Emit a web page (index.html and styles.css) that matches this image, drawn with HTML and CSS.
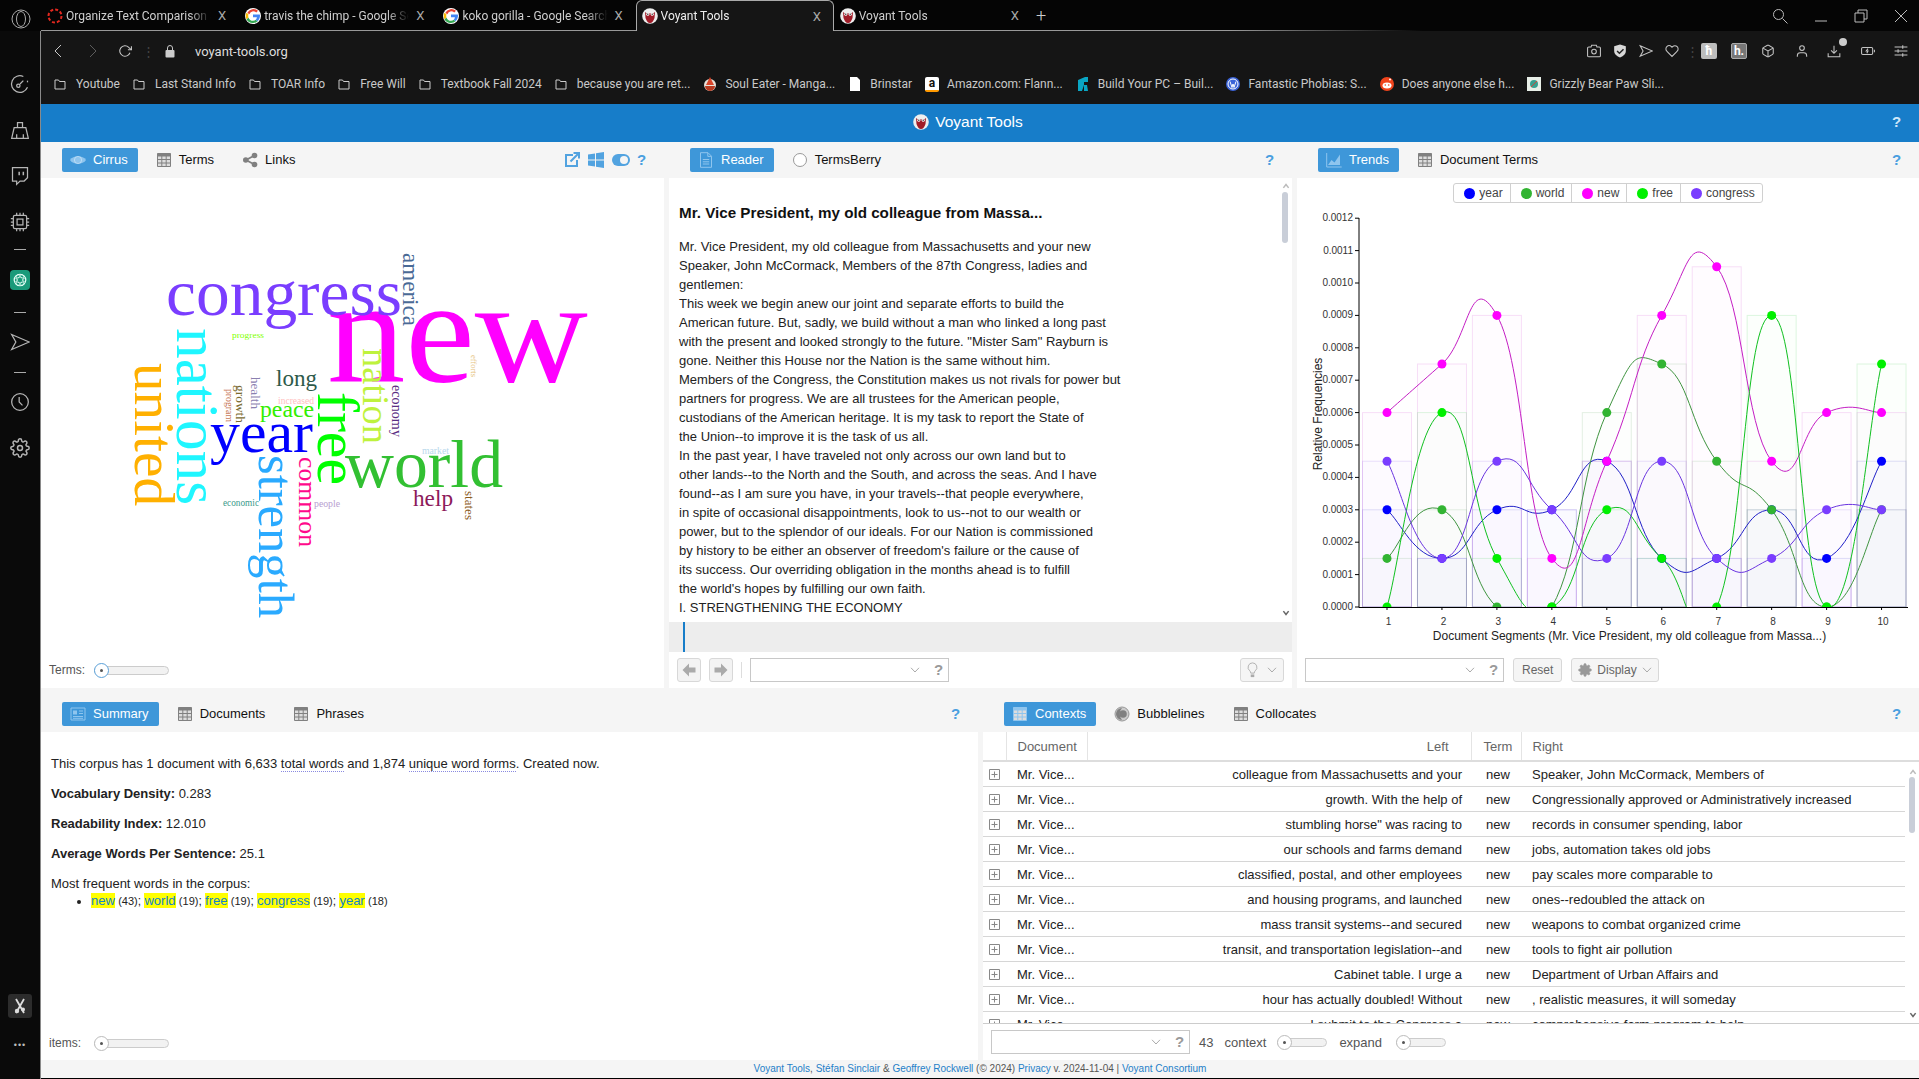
FILE: index.html
```html
<!DOCTYPE html>
<html lang="en">
<head>
<meta charset="utf-8">
<title>Voyant Tools</title>
<link rel="stylesheet" href="styles.css">
</head>
<body>
<svg class="sprite" xmlns="http://www.w3.org/2000/svg">
  <symbol id="i-grid" viewBox="0 0 16 16"><path d="M1.5 1.5h13v13h-13z" fill="#ddd" stroke="currentColor"/><path d="M1.5 1.5h13v3h-13z" fill="currentColor"/><path d="M1.5 7.5h13M1.5 11h13M5.8 4v10.5M10.2 4v10.5" fill="none" stroke="currentColor"/></symbol>
  <symbol id="i-eye" viewBox="0 0 16 16"><path d="M0 8c3-5 13-5 16 0-3 5-13 5-16 0z" fill="currentColor"/><circle cx="8" cy="8" r="3.6" fill="currentColor" stroke="#fff" stroke-opacity=".4"/></symbol>
  <symbol id="i-share" viewBox="0 0 16 16"><path d="M12.5 3.5 4 8l8.500 4.500" fill="none" stroke="currentColor" stroke-width="1.800"/><circle cx="12.500" cy="3.500" r="2.800" fill="currentColor"/><circle cx="3.800" cy="8" r="2.800" fill="currentColor"/><circle cx="12.500" cy="12.500" r="2.800" fill="currentColor"/></symbol>
  <symbol id="i-doc" viewBox="0 0 16 16"><path d="M2.500.7h7.500l3.500 3.500v11.100h-11z" fill="none" stroke="currentColor"/><path d="M9.800 1v3.400h3.400M4.800 7.500h6.400M4.800 9.800h6.400M4.800 12h6.400" fill="none" stroke="currentColor"/></symbol>
  <symbol id="i-radio" viewBox="0 0 16 16"><circle cx="8" cy="8" r="6.500" fill="#fff" stroke="currentColor"/></symbol>
  <symbol id="i-trend" viewBox="0 0 16 16"><path d="M.7 1v14h15" fill="none" stroke="currentColor"/><path d="M2 13l3.500-5 3 2.500L14 2.500V13z" fill="currentColor"/></symbol>
  <symbol id="i-card" viewBox="0 0 16 16"><path d="M1 2h14v12H1z" fill="none" stroke="currentColor"/><path d="M3 4.500h4v4H3z" fill="currentColor"/><path d="M9 5h4M9 7.500h4M3 10.500h10M3 12.300h10" stroke="currentColor"/></symbol>
  <symbol id="i-bubble" viewBox="0 0 16 16"><circle cx="8" cy="8" r="7" fill="#ccc" stroke="#999"/><path d="M8 2a6 6 0 0 0 0 12 9 9 0 0 1 0-12z" fill="currentColor"/><circle cx="9" cy="8" r="3.800" fill="currentColor"/></symbol>
  <symbol id="i-open" viewBox="0 0 16 16"><path d="M9 3H2v11h11V8" fill="none" stroke="currentColor" stroke-width="2"/><path d="M6.500 9.500 14 2M9.500 1H15v5.500" fill="none" stroke="currentColor" stroke-width="2"/></symbol>
  <symbol id="i-win" viewBox="0 0 16 16"><path d="M0 2.500 7 1.500v6H0zM8 1.300 16 0v7.500H8zM0 8.500h7v6l-7-1zM8 8.500h8V16l-8-1.300z" fill="currentColor"/></symbol>
  <symbol id="i-toggle" viewBox="0 0 18 12"><rect width="18" height="12" rx="6" fill="currentColor"/><circle cx="12" cy="6" r="4" fill="#f5f5f5"/></symbol>
  <symbol id="i-chev" viewBox="0 0 10 6"><path d="M1 .8 5 5l4-4.200" fill="none" stroke="currentColor"/></symbol>
  <symbol id="i-chevbold" viewBox="0 0 10 8"><path d="M1.500 1.500 5 6l3.500-4.500" fill="none" stroke="currentColor" stroke-width="2"/></symbol>
  <symbol id="i-arrow" viewBox="0 0 16 16"><path d="M8 1.500 1.500 8 8 14.500V10.500h6.500v-5H8z" fill="currentColor"/></symbol>
  <symbol id="i-bulb" viewBox="0 0 12 18"><path d="M6 1a5 5 0 0 0-3 9c.8.700 1 1.500 1 2.500h4c0-1 .2-1.800 1-2.500A5 5 0 0 0 6 1z" fill="#f4f4f4" stroke="currentColor"/><path d="M4 14h4v3H4z" fill="currentColor"/></symbol>
  <symbol id="i-gear" viewBox="0 0 24 24"><circle cx="12" cy="12" r="3"/><path d="M19.400 15a1.650 1.650 0 0 0 .33 1.820l.06.06a2 2 0 0 1 0 2.830 2 2 0 0 1-2.830 0l-.06-.06a1.650 1.650 0 0 0-1.820-.33 1.650 1.650 0 0 0-1 1.510V21a2 2 0 0 1-2 2 2 2 0 0 1-2-2v-.09A1.650 1.650 0 0 0 9 19.400a1.650 1.650 0 0 0-1.820.33l-.06.06a2 2 0 0 1-2.830 0 2 2 0 0 1 0-2.830l.06-.06a1.650 1.650 0 0 0 .33-1.820 1.650 1.650 0 0 0-1.510-1H3a2 2 0 0 1-2-2 2 2 0 0 1 2-2h.09A1.650 1.650 0 0 0 4.600 9a1.650 1.650 0 0 0-.33-1.820l-.06-.06a2 2 0 0 1 0-2.830 2 2 0 0 1 2.830 0l.06.06a1.650 1.650 0 0 0 1.820.33H9a1.650 1.650 0 0 0 1-1.510V3a2 2 0 0 1 2-2 2 2 0 0 1 2 2v.09a1.650 1.650 0 0 0 1 1.510 1.650 1.650 0 0 0 1.820-.33l.06-.06a2 2 0 0 1 2.830 0 2 2 0 0 1 0 2.830l-.06.06a1.650 1.650 0 0 0-.33 1.820V9a1.650 1.650 0 0 0 1.510 1H21a2 2 0 0 1 2 2 2 2 0 0 1-2 2h-.09a1.650 1.650 0 0 0-1.510 1z"/></symbol>
  <symbol id="i-plusbox" viewBox="0 0 11 11"><path d="M.5.500h10v10H.5zM5.500 2.500v6M2.500 5.500h6" fill="none" stroke="currentColor"/></symbol>
  <symbol id="i-folder" viewBox="0 0 12 12"><path d="M1 2h3.500l1 1.500H11V11H1z" fill="none" stroke="currentColor"/></symbol>
  <symbol id="i-voyant" viewBox="0 0 16 16"><circle cx="8" cy="8" r="7.800" fill="#eee"/><path d="M3 4l2 1.500h6L13 4l-.5 6C11.500 13 10 15 8 15s-3.500-2-4.500-5z" fill="#a01c28"/><circle cx="5.800" cy="6.300" r="1.500" fill="#fff"/><circle cx="10.200" cy="6.300" r="1.500" fill="#fff"/><circle cx="5.800" cy="6.300" r=".7" fill="#222"/><circle cx="10.200" cy="6.300" r=".7" fill="#222"/></symbol>
  <symbol id="i-google" viewBox="0 0 16 16"><circle cx="8" cy="8" r="8" fill="#fff"/><path d="M8 3.200a4.800 4.800 0 0 1 3.300 1.300l1.700-1.700A7 7 0 0 0 2.300 4.800l2 1.500A4.800 4.800 0 0 1 8 3.200z" fill="#ea4335"/><path d="M3.200 8c0-.6.100-1.200.3-1.700l-2-1.500a7 7 0 0 0 0 6.400l2-1.500A4.800 4.800 0 0 1 3.200 8z" fill="#fbbc05"/><path d="M8 12.800a4.800 4.800 0 0 1-4.500-3.100l-2 1.500A7 7 0 0 0 8 15a7 7 0 0 0 4.700-1.800l-1.900-1.500a4.800 4.800 0 0 1-2.800 1.100z" fill="#34a853"/><path d="M15 8c0-.5 0-1-.2-1.400H8v2.700h3.900a3.400 3.400 0 0 1-1.100 2.400l1.900 1.500C14 11.500 15 9.900 15 8z" fill="#4285f4"/></symbol>
</svg>

<div class="tabstrip">
  <div class="logo"><svg class="ic-18" viewBox="0 0 20 20"><circle cx="10" cy="10" r="9" class="st"/><ellipse cx="10" cy="10" rx="4.500" ry="7.500" class="st"/></svg></div>
  <div class="tab"><svg class="fav" viewBox="0 0 16 16"><circle cx="8" cy="8" r="6.500" fill="none" stroke="#e3281f" stroke-width="2" stroke-dasharray="3 2"/></svg><span class="tab-text">Organize Text Comparison Summary</span><span class="tab-x">X</span></div>
  <div class="tab"><svg class="fav"><use href="#i-google"/></svg><span class="tab-text">travis the chimp - Google Search</span><span class="tab-x">X</span></div>
  <div class="tab"><svg class="fav"><use href="#i-google"/></svg><span class="tab-text">koko gorilla - Google Search</span><span class="tab-x">X</span></div>
  <div class="tab active"><svg class="fav"><use href="#i-voyant"/></svg><span class="tab-text">Voyant Tools</span><span class="tab-x">X</span></div>
  <div class="tab"><svg class="fav"><use href="#i-voyant"/></svg><span class="tab-text">Voyant Tools</span><span class="tab-x">X</span></div>
  <span class="tab-plus">+</span>
  <div class="winctl">
    <svg class="ic-16" viewBox="0 0 16 16"><circle cx="6.500" cy="6.500" r="5" class="st"/><path d="m10.500 10.500 5 5" class="st"/></svg>
    <svg class="ic-14" viewBox="0 0 14 14"><path d="M1 12h12" class="st"/></svg>
    <svg class="ic-14" viewBox="0 0 14 14"><path d="M1 4h9v9H1zM4 4V1h9v9h-3" class="st"/></svg>
    <svg class="ic-14" viewBox="0 0 14 14"><path d="m1 1 12 12M13 1 1 13" class="st"/></svg>
  </div>
</div>

<div class="shell">
  <nav class="sidebar">
    <svg class="si ic-20" viewBox="0 0 24 24"><path d="M21 16A10 10 0 1 1 16 3" class="st"/><path d="M21 8v2" class="st"/><circle cx="10" cy="14" r="2" class="st"/><path d="m12 12 4-4" class="st"/></svg>
    <svg class="si ic-20" viewBox="0 0 24 24"><path d="M9 9V3h6v6M5 9h14l3 13H2z" class="st"/><path d="M8 22v-5M16 22v-5" class="st"/></svg>
    <svg class="si ic-20" viewBox="0 0 24 24"><path d="M21 2H3v16h5v4l4-4h5l4-4z" class="st"/><path d="M11 11V7M16 11V7" class="st2"/></svg>
    <svg class="si ic-20" viewBox="0 0 24 24"><rect x="4" y="4" width="16" height="16" rx="2" class="st"/><rect x="8.500" y="8.500" width="7" height="7" class="st"/><path d="M1 8h3M1 12h3M1 16h3M20 8h3M20 12h3M20 16h3M8 1v3M12 1v3M16 1v3M8 20v3M12 20v3M16 20v3" class="st"/></svg>
    <span class="sdiv sdiv-a"></span>
    <span class="gpt"><svg class="ic-14 gptmark" viewBox="0 0 24 24"><circle cx="12" cy="12" r="10" class="st2"/><ellipse cx="12" cy="12" rx="10" ry="4.500" class="st" transform="rotate(60 12 12)"/><ellipse cx="12" cy="12" rx="10" ry="4.500" class="st" transform="rotate(-60 12 12)"/><ellipse cx="12" cy="12" rx="10" ry="4.500" class="st"/></svg></span>
    <span class="sdiv sdiv-b"></span>
    <svg class="si ic-20" viewBox="0 0 24 24"><path d="M2 3l21 9-21 9 5-9z" class="st"/></svg>
    <span class="sdiv sdiv-b"></span>
    <svg class="si ic-20" viewBox="0 0 24 24"><circle cx="12" cy="12" r="10" class="st"/><path d="M11 6v6l4 4" class="st"/></svg>
    <svg class="si ic-20 gearline"><use href="#i-gear"/></svg>
    <span class="side-tool"><svg class="ic-16" viewBox="0 0 16 16"><path d="m4 1 8 14M12 1 4 15" class="st2"/><circle cx="5" cy="13" r="2.200" fill="#ddd"/><circle cx="11" cy="11.500" r="2" fill="#ddd"/></svg></span>
    <span class="side-dots">•••</span>
  </nav>

  <main class="main">
    <div class="addr">
      <svg class="ic-14 nav-back" viewBox="0 0 14 14"><path d="M9 1 3 7l6 6" class="st"/></svg>
      <svg class="ic-14 nav-fwd" viewBox="0 0 14 14"><path d="m5 1 6 6-6 6" class="st dim"/></svg>
      <svg class="ic-14 nav-reload" viewBox="0 0 24 24"><path d="M23 4v6h-6" class="st2"/><path d="M20.500 15a9 9 0 1 1-2.100-9.400L23 10" class="st2"/></svg>
      <span class="addr-dots">⋮</span>
      <svg class="ic-12 nav-lock" viewBox="0 0 12 14"><path d="M3.500 6V4a2.500 2.500 0 0 1 5 0v2" class="st"/><rect x="1.500" y="6" width="9" height="7.500" rx="1" fill="#ccc"/></svg>
      <span class="url">voyant-tools.org</span>
      <div class="addr-tools">
        <svg class="ic-14" viewBox="0 0 24 24"><path d="M23 20a2 2 0 0 1-2 2H3a2 2 0 0 1-2-2V7a2 2 0 0 1 2-2h4l1-3h8l1 3h4a2 2 0 0 1 2 2z" class="st2"/><circle cx="12" cy="13" r="4" class="st2"/></svg>
        <svg class="ic-14" viewBox="0 0 24 24"><path d="M12 1 22 4v8c0 6-5 9-10 11C7 21 2 18 2 12V4z" fill="#d8d8d8"/><path d="m7 12 4 4 7-7" fill="none" stroke="#222" stroke-width="2.500"/></svg>
        <svg class="ic-14" viewBox="0 0 24 24"><path d="M2 3l21 9-21 9 5-9z" class="st2"/></svg>
        <svg class="ic-14" viewBox="0 0 24 24"><path d="M20.840 4.610a5.500 5.500 0 0 0-7.780 0L12 5.670l-1.060-1.060a5.500 5.500 0 0 0-7.780 7.780l1.060 1.060L12 21.230l7.780-7.780 1.060-1.060a5.500 5.500 0 0 0 0-7.780z" class="st2"/></svg>
        <span class="tool-sep">⋮</span>
        <span class="ext-tile">ћ</span>
        <span class="ext-tile ext-dark">h.</span>
        <svg class="ic-14 ml-2" viewBox="0 0 24 24"><path d="M21 16V8a2 2 0 0 0-1-1.730l-7-4a2 2 0 0 0-2 0l-7 4A2 2 0 0 0 3 8v8a2 2 0 0 0 1 1.730l7 4a2 2 0 0 0 2 0l7-4A2 2 0 0 0 21 16z" class="st2"/><path d="M3.300 7 12 12l8.700-5M12 22V12" class="st2"/></svg>
        <svg class="ic-14 ml-8" viewBox="0 0 24 24"><path d="M20 22v-2a5 5 0 0 0-5-5H9a5 5 0 0 0-5 5v2" class="st2"/><circle cx="12" cy="7" r="4" class="st2"/></svg>
        <span class="dl"><svg class="ic-14" viewBox="0 0 24 24"><path d="M22 16v6H2v-6M7 11l5 5 5-5M12 16V3" class="st2"/></svg><i class="dl-dot"></i></span>
        <svg class="ic-14 ml-8" viewBox="0 0 24 24"><rect x="1" y="6" width="19" height="12" rx="2" class="st2"/><path d="M23 10v4M12 8l-3 4h3l-2 4" class="st2"/></svg>
        <svg class="ic-14 ml-7" viewBox="0 0 24 24"><path d="M1 5h22M1 12h22M1 19h22M15 2v6M7 9v6M15 16v6" class="st2"/></svg>
      </div>
    </div>

    <div class="bookmarks">
      <span class="bm"><svg class="bm-ic"><use href="#i-folder"/></svg>Youtube</span>
      <span class="bm"><svg class="bm-ic"><use href="#i-folder"/></svg>Last Stand Info</span>
      <span class="bm"><svg class="bm-ic"><use href="#i-folder"/></svg>TOAR Info</span>
      <span class="bm"><svg class="bm-ic"><use href="#i-folder"/></svg>Free Will</span>
      <span class="bm"><svg class="bm-ic"><use href="#i-folder"/></svg>Textbook Fall 2024</span>
      <span class="bm"><svg class="bm-ic"><use href="#i-folder"/></svg>because you are ret...</span>
      <span class="bm"><svg class="bm-fav" viewBox="0 0 14 14"><circle cx="7" cy="8" r="6" fill="#e8e0d8"/><path d="M7 0 11 8H3z" fill="#d8452a"/><path d="M2 9h10a5 5 0 0 1-10 0z" fill="#b83a20"/></svg>Soul Eater - Manga...</span>
      <span class="bm"><svg class="bm-fav" viewBox="0 0 14 14"><path d="M2 0h7l3 3v11H2z" fill="#fff"/></svg>Brinstar</span>
      <span class="bm"><span class="amz">a</span>Amazon.com: Flann...</span>
      <span class="bm"><svg class="bm-fav" viewBox="0 0 14 14"><path d="M2 3 9 0h3v5H8v3l-2 6H2z" fill="#0aa6c4"/><path d="M8 8h3l1 6H8z" fill="#0aa6c4"/></svg>Build Your PC – Buil...</span>
      <span class="bm"><svg class="bm-fav" viewBox="0 0 14 14"><circle cx="7" cy="7" r="7" fill="#3a63d8"/><circle cx="7" cy="7" r="5" fill="none" stroke="#fff"/><path d="m4 4.500 2 6 1-3.500 1 3.500 2-6" fill="none" stroke="#fff"/></svg>Fantastic Phobias: S...</span>
      <span class="bm"><svg class="bm-fav" viewBox="0 0 14 14"><circle cx="7" cy="7" r="7" fill="#f0441c"/><ellipse cx="7" cy="8.500" rx="4.500" ry="3" fill="#fff"/><circle cx="5.300" cy="8" r=".8" fill="#f0441c"/><circle cx="8.700" cy="8" r=".8" fill="#f0441c"/><circle cx="10" cy="2.500" r="1" fill="#fff"/></svg>Does anyone else h...</span>
      <span class="bm"><svg class="bm-fav" viewBox="0 0 14 14"><rect width="14" height="14" fill="#e8efe8"/><circle cx="7" cy="7" r="4" fill="#3aa090"/><path d="M4 10l6-6" stroke="#d0453a"/></svg>Grizzly Bear Paw Sli...</span>
    </div>

    <header class="banner">
      <span class="banner-title"><svg class="ic-16"><use href="#i-voyant"/></svg>Voyant Tools</span>
      <span class="help banner-help">?</span>
    </header>

    <section class="top-row">
      <article class="panel">
        <div class="ptabs">
          <span class="ptab on"><svg class="ic-16"><use href="#i-eye"/></svg>Cirrus</span>
          <span class="ptab"><svg class="ic-16"><use href="#i-grid"/></svg>Terms</span>
          <span class="ptab"><svg class="ic-16"><use href="#i-share"/></svg>Links</span>
          <span class="ptab-tools">
            <svg class="ic-16"><use href="#i-open"/></svg>
            <svg class="ic-16"><use href="#i-win"/></svg>
            <svg class="toggle"><use href="#i-toggle"/></svg>
            <span class="help">?</span>
          </span>
        </div>
        <div class="pbody">
          <svg class="cirrus" viewBox="41 178 623 474">
            <text x="327" y="382" font-size="148" fill="#ff00ff" textLength="261" lengthAdjust="spacingAndGlyphs">new</text>
            <text x="166" y="315" font-size="66" fill="#7a3dff" textLength="236" lengthAdjust="spacingAndGlyphs">congress</text>
            <text x="345" y="487" font-size="68" fill="#32c032" textLength="158" lengthAdjust="spacingAndGlyphs">world</text>
            <text x="210" y="452" font-size="60" fill="#0000ff" textLength="103" lengthAdjust="spacingAndGlyphs">year</text>
            <text transform="translate(403 253) rotate(90)" font-size="23" fill="#4a6a96" textLength="73" lengthAdjust="spacingAndGlyphs">america</text>
            <text transform="translate(177 328) rotate(90)" font-size="61" fill="#1ff6ff" textLength="177" lengthAdjust="spacingAndGlyphs">nations</text>
            <text transform="translate(135 363) rotate(90)" font-size="57" fill="#ffb000" textLength="143" lengthAdjust="spacingAndGlyphs">united</text>
            <text transform="translate(363 348) rotate(90)" font-size="38" fill="#bef23d" textLength="96" lengthAdjust="spacingAndGlyphs">nation</text>
            <text transform="translate(318 392) rotate(90)" font-size="60" fill="#00ff00" textLength="93" lengthAdjust="spacingAndGlyphs">free</text>
            <text transform="translate(259 455) rotate(90)" font-size="50" fill="#2aaaff" textLength="163" lengthAdjust="spacingAndGlyphs">strength</text>
            <text transform="translate(299 457) rotate(90)" font-size="26" fill="#ff0a8c" textLength="90" lengthAdjust="spacingAndGlyphs">common</text>
            <text transform="translate(471 355) rotate(90)" font-size="9" fill="#e6c27a" textLength="22" lengthAdjust="spacingAndGlyphs">efforts</text>
            <text transform="translate(392 385) rotate(90)" font-size="14" fill="#5a2d82" textLength="52" lengthAdjust="spacingAndGlyphs">economy</text>
            <text transform="translate(251 377) rotate(90)" font-size="13" fill="#8a80b0" textLength="32" lengthAdjust="spacingAndGlyphs">health</text>
            <text transform="translate(236 385) rotate(90)" font-size="13.500" fill="#7a6a30" textLength="38" lengthAdjust="spacingAndGlyphs">growth</text>
            <text transform="translate(226 389) rotate(90)" font-size="10" fill="#c87a5a" textLength="33" lengthAdjust="spacingAndGlyphs">program</text>
            <text transform="translate(465 491) rotate(90)" font-size="13" fill="#8a5a1a" textLength="29" lengthAdjust="spacingAndGlyphs">states</text>
            <text x="232" y="338" font-size="9" fill="#7fff00" textLength="32" lengthAdjust="spacingAndGlyphs">progress</text>
            <text x="276" y="386" font-size="23" fill="#2d5a4a" textLength="41" lengthAdjust="spacingAndGlyphs">long</text>
            <text x="278" y="404" font-size="9.500" fill="#ffc0c0" textLength="36" lengthAdjust="spacingAndGlyphs">increased</text>
            <text x="260" y="417" font-size="24" fill="#33ee00" textLength="54" lengthAdjust="spacingAndGlyphs">peace</text>
            <text x="413" y="506" font-size="23" fill="#8c1a5a" textLength="40" lengthAdjust="spacingAndGlyphs">help</text>
            <text x="422" y="454" font-size="9.500" fill="#b8d8ec" textLength="27" lengthAdjust="spacingAndGlyphs">market</text>
            <text x="223" y="506" font-size="9.500" fill="#3a9a8a" textLength="36" lengthAdjust="spacingAndGlyphs">economic</text>
            <text x="314" y="507" font-size="11" fill="#b8a0d0" textLength="26" lengthAdjust="spacingAndGlyphs">people</text>
          </svg>
        </div>
        <div class="ptool">
          <span class="sl-label">Terms:</span>
          <span class="slider focus"><i></i></span>
        </div>
      </article>

      <article class="panel">
        <div class="ptabs">
          <span class="ptab on"><svg class="ic-16"><use href="#i-doc"/></svg>Reader</span>
          <span class="ptab"><svg class="ic-16 muted"><use href="#i-radio"/></svg>TermsBerry</span>
          <span class="ptab-tools"><span class="help">?</span></span>
        </div>
        <div class="pbody reader">
          <h2 class="reader-title">Mr. Vice President, my old colleague from Massa...</h2>
          <p class="reader-text">Mr. Vice President, my old colleague from Massachusetts and your new<br>Speaker, John McCormack, Members of the 87th Congress, ladies and<br>gentlemen:<br>This week we begin anew our joint and separate efforts to build the<br>American future. But, sadly, we build without a man who linked a long past<br>with the present and looked strongly to the future. "Mister Sam" Rayburn is<br>gone. Neither this House nor the Nation is the same without him.<br>Members of the Congress, the Constitution makes us not rivals for power but<br>partners for progress. We are all trustees for the American people,<br>custodians of the American heritage. It is my task to report the State of<br>the Union--to improve it is the task of us all.<br>In the past year, I have traveled not only across our own land but to<br>other lands--to the North and the South, and across the seas. And I have<br>found--as I am sure you have, in your travels--that people everywhere,<br>in spite of occasional disappointments, look to us--not to our wealth or<br>power, but to the splendor of our ideals. For our Nation is commissioned<br>by history to be either an observer of freedom's failure or the cause of<br>its success. Our overriding obligation in the months ahead is to fulfill<br>the world's hopes by fulfilling our own faith.<br>I. STRENGTHENING THE ECONOMY</p>
          <div class="vscroll reader-scroll"><svg class="sb-up"><use href="#i-chevbold"/></svg><i class="sb-thumb"></i><svg class="sb-down"><use href="#i-chevbold"/></svg></div>
        </div>
        <div class="reader-strip"><i class="strip-mark"></i></div>
        <div class="ptool">
          <span class="btn-ico"><svg class="ic-16"><use href="#i-arrow"/></svg></span>
          <span class="btn-ico"><svg class="ic-16 flip"><use href="#i-arrow"/></svg></span>
          <span class="tsep"></span>
          <span class="combo"><svg class="chev"><use href="#i-chev"/></svg><span class="help gray">?</span></span>
          <span class="btn-bulb"><svg class="bulb"><use href="#i-bulb"/></svg><svg class="chev"><use href="#i-chev"/></svg></span>
        </div>
      </article>

      <article class="panel">
        <div class="ptabs">
          <span class="ptab on"><svg class="ic-16"><use href="#i-trend"/></svg>Trends</span>
          <span class="ptab"><svg class="ic-16"><use href="#i-grid"/></svg>Document Terms</span>
          <span class="ptab-tools"><span class="help">?</span></span>
        </div>
        <div class="pbody trends">
          <div class="legend">
            <span class="lg"><i class="dot d-year"></i>year</span>
            <span class="lg"><i class="dot d-world"></i>world</span>
            <span class="lg"><i class="dot d-new"></i>new</span>
            <span class="lg"><i class="dot d-free"></i>free</span>
            <span class="lg"><i class="dot d-congress"></i>congress</span>
          </div>
          <svg id="chart" class="chart" viewBox="1297 203 622 449"></svg>
        </div>
        <div class="ptool">
          <span class="combo"><svg class="chev"><use href="#i-chev"/></svg><span class="help gray">?</span></span>
          <span class="btn-text">Reset</span>
          <span class="btn-text btn-display"><svg class="ic-14 gearfill"><use href="#i-gear"/></svg>Display<svg class="chev"><use href="#i-chev"/></svg></span>
        </div>
      </article>
    </section>

    <section class="bottom-row">
      <article class="panel">
        <div class="ptabs tall">
          <span class="ptab on"><svg class="ic-16"><use href="#i-card"/></svg>Summary</span>
          <span class="ptab"><svg class="ic-16"><use href="#i-grid"/></svg>Documents</span>
          <span class="ptab"><svg class="ic-16"><use href="#i-grid"/></svg>Phrases</span>
          <span class="ptab-tools"><span class="help">?</span></span>
        </div>
        <div class="pbody summary">
          <p>This corpus has 1 document with 6,633 <span class="dotted">total words</span> and 1,874 <span class="dotted">unique word forms</span>. Created now.</p>
          <p><b>Vocabulary Density:</b> 0.283</p>
          <p><b>Readability Index:</b> 12.010</p>
          <p><b>Average Words Per Sentence:</b> 25.1</p>
          <p class="tight">Most frequent words in the corpus:</p>
          <ul><li><a class="kw">new</a> <small>(43)</small>; <a class="kw">world</a> <small>(19)</small>; <a class="kw">free</a> <small>(19)</small>; <a class="kw">congress</a> <small>(19)</small>; <a class="kw">year</a> <small>(18)</small></li></ul>
        </div>
        <div class="ptool tool-34">
          <span class="sl-label">items:</span>
          <span class="slider"><i></i></span>
        </div>
      </article>

      <article class="panel">
        <div class="ptabs tall">
          <span class="ptab on"><svg class="ic-16"><use href="#i-grid"/></svg>Contexts</span>
          <span class="ptab"><svg class="ic-16"><use href="#i-bubble"/></svg>Bubblelines</span>
          <span class="ptab"><svg class="ic-16"><use href="#i-grid"/></svg>Collocates</span>
          <span class="ptab-tools"><span class="help">?</span></span>
        </div>
        <div class="pbody ctx">
          <table class="ctx-table">
            <thead><tr><th class="c-x"></th><th class="c-doc">Document</th><th class="c-left">Left</th><th class="c-term">Term</th><th class="c-right">Right</th></tr></thead>
            <tbody>
              <tr><td class="c-x"><svg class="plus"><use href="#i-plusbox"/></svg></td><td class="c-doc">Mr. Vice...</td><td class="c-left">colleague from Massachusetts and your</td><td class="c-term">new</td><td class="c-right">Speaker, John McCormack, Members of</td></tr>
              <tr><td class="c-x"><svg class="plus"><use href="#i-plusbox"/></svg></td><td class="c-doc">Mr. Vice...</td><td class="c-left">growth. With the help of</td><td class="c-term">new</td><td class="c-right">Congressionally approved or Administratively increased</td></tr>
              <tr><td class="c-x"><svg class="plus"><use href="#i-plusbox"/></svg></td><td class="c-doc">Mr. Vice...</td><td class="c-left">stumbling horse" was racing to</td><td class="c-term">new</td><td class="c-right">records in consumer spending, labor</td></tr>
              <tr><td class="c-x"><svg class="plus"><use href="#i-plusbox"/></svg></td><td class="c-doc">Mr. Vice...</td><td class="c-left">our schools and farms demand</td><td class="c-term">new</td><td class="c-right">jobs, automation takes old jobs</td></tr>
              <tr><td class="c-x"><svg class="plus"><use href="#i-plusbox"/></svg></td><td class="c-doc">Mr. Vice...</td><td class="c-left">classified, postal, and other employees</td><td class="c-term">new</td><td class="c-right">pay scales more comparable to</td></tr>
              <tr><td class="c-x"><svg class="plus"><use href="#i-plusbox"/></svg></td><td class="c-doc">Mr. Vice...</td><td class="c-left">and housing programs, and launched</td><td class="c-term">new</td><td class="c-right">ones--redoubled the attack on</td></tr>
              <tr><td class="c-x"><svg class="plus"><use href="#i-plusbox"/></svg></td><td class="c-doc">Mr. Vice...</td><td class="c-left">mass transit systems--and secured</td><td class="c-term">new</td><td class="c-right">weapons to combat organized crime</td></tr>
              <tr><td class="c-x"><svg class="plus"><use href="#i-plusbox"/></svg></td><td class="c-doc">Mr. Vice...</td><td class="c-left">transit, and transportation legislation--and</td><td class="c-term">new</td><td class="c-right">tools to fight air pollution</td></tr>
              <tr><td class="c-x"><svg class="plus"><use href="#i-plusbox"/></svg></td><td class="c-doc">Mr. Vice...</td><td class="c-left">Cabinet table. I urge a</td><td class="c-term">new</td><td class="c-right">Department of Urban Affairs and</td></tr>
              <tr><td class="c-x"><svg class="plus"><use href="#i-plusbox"/></svg></td><td class="c-doc">Mr. Vice...</td><td class="c-left">hour has actually doubled! Without</td><td class="c-term">new</td><td class="c-right">, realistic measures, it will someday</td></tr>
              <tr><td class="c-x"><svg class="plus"><use href="#i-plusbox"/></svg></td><td class="c-doc">Mr. Vice...</td><td class="c-left">I submit to the Congress a</td><td class="c-term">new</td><td class="c-right">comprehensive farm program to help</td></tr>
            </tbody>
          </table>
          <div class="vscroll ctx-scroll"><svg class="sb-up"><use href="#i-chevbold"/></svg><i class="sb-thumb"></i><svg class="sb-down"><use href="#i-chevbold"/></svg></div>
        </div>
        <div class="ptool ctx-tool">
          <span class="combo"><svg class="chev"><use href="#i-chev"/></svg><span class="help gray">?</span></span>
          <span class="count">43</span>
          <span>context</span>
          <span class="slider short"><i></i></span>
          <span class="expand">expand</span>
          <span class="slider short"><i></i></span>
        </div>
      </article>
    </section>

    <footer class="foot"><a>Voyant Tools</a>, <a>Stéfan Sinclair</a> &amp; <a>Geoffrey Rockwell</a> (© 2024) <a>Privacy</a> v. 2024-11-04 | <a>Voyant Consortium</a></footer>
  </main>
</div>
<script src="script.js"></script>
</body>
</html>
```
FILE: styles.css
```css
* { box-sizing: border-box; }
html, body { margin: 0; height: 100%; }
body { width: 1919px; height: 1079px; overflow: hidden; background: #0a0a0a; font-family: "Liberation Sans", Arial, sans-serif; font-size: 13px; color: #222; display: flex; flex-direction: column; }
.sprite { display: none; }
svg { display: block; flex: none; }
.st { fill: none; stroke: currentColor; stroke-width: 1; }
.st2 { fill: none; stroke: currentColor; stroke-width: 1.8; }
.dim { opacity: .4; }
.ic-12 { width: 12px; height: 14px; }
.ic-14 { width: 14px; height: 14px; }
.ic-16 { width: 16px; height: 16px; }
.ic-18 { width: 20px; height: 20px; }
.ic-20 { width: 20px; height: 20px; }
.ml-2 { margin-left: 2px; }
.ml-7 { margin-left: 7px; }
.ml-8 { margin-left: 8px; }

/* browser chrome */
.tabstrip { height: 31px; flex: none; display: flex; align-items: center; background: #050505 linear-gradient(to right, #999 0, #999 62%, transparent 72%) no-repeat 41px 100% / 100% 1px; color: #cfcfcf; font-family: Roboto, sans-serif; font-size: 12px; }
.logo { width: 41px; display: flex; justify-content: center; color: #aaa; padding-top: 6px; }
.tab { width: 198.200px; height: 31px; flex: none; display: flex; align-items: center; padding: 0 11px 0 6px; gap: 3px; }
.tab.active { background: #151515; border: 1px solid #aaa; border-bottom: 0; border-radius: 6px 6px 0 0; padding: 0 10px 0 5px; color: #eee; }
.fav { width: 16px; height: 16px; }
.tab-text { flex: 1; white-space: nowrap; overflow: hidden; -webkit-mask-image: linear-gradient(to right, #000 85%, transparent 100%); mask-image: linear-gradient(to right, #000 85%, transparent 100%); }
.tab-x { width: 12px; margin-left: 2px; text-align: center; color: #aaa; font-size: 13px; }
.tab-plus { margin-left: 4px; font-size: 18px; font-weight: 300; color: #ccc; line-height: 20px; }
.winctl { margin-left: auto; display: flex; align-items: center; gap: 26px; padding-right: 11px; color: #bbb; }

.shell { flex: 1; display: flex; min-height: 0; }
.sidebar { width: 41px; flex: none; background: #0a0a0a; border-right: 1px solid #8a8a8a; display: flex; flex-direction: column; align-items: center; padding-top: 30px; color: #b5b5b5; }
.sidebar .st { stroke-width: 1.500; }
.si { height: 22px; margin: 12px 0; }
.sdiv { width: 12px; height: 1px; background: #aaa; flex: none; }
.sdiv-a { margin: 4px 0 5px; }
.sdiv-b { margin: 7px 0 6px; }
.gpt { width: 20px; height: 20px; background: #1a9a7a; border-radius: 4px; margin: 15px 0; display: flex; align-items: center; justify-content: center; color: #e8fff8; }
.sidebar .gpt .st { stroke-width: 1; }
.gearline { fill: none; stroke: currentColor; stroke-width: 1.800; }
.side-tool { margin-top: auto; width: 24px; height: 24px; background: #2c2c2c; border-radius: 3px; display: flex; align-items: center; justify-content: center; color: #ddd; margin-bottom: 21px; }
.side-dots { font-size: 9px; letter-spacing: 1px; color: #bbb; margin-bottom: 28px; line-height: 12px; }

.main { flex: 1; min-width: 0; display: flex; flex-direction: column; background: #f5f5f5; }
.addr { height: 38px; flex: none; background: #151515; display: flex; align-items: center; color: #c8c8c8; font-family: Roboto, sans-serif; font-size: 13px; position: relative; padding: 2px 0 0 11px; }
.nav-fwd { margin-left: 19px; }
.nav-reload { margin-left: 19px; }
.addr-dots { margin-left: 10px; width: 10px; color: #444; }
.nav-lock { margin-left: 12px; }
.url { margin-left: 19px; color: #ddd; }
.addr-tools { margin-left: auto; display: flex; align-items: center; gap: 12px; padding-right: 11px; color: #c4c4c4; }
.tool-sep { color: #444; width: 6px; margin: 0 -3px 0 -5px; text-align: center; }
.ext-tile { width: 16px; height: 16px; background: #bdbdbd; border-radius: 2px; color: #fff; font-size: 12px; line-height: 16px; text-align: center; font-weight: 700; }
.ext-dark { background: #777; border: 1px solid #aaa; margin-left: 2px; line-height: 14px; }
.dl { position: relative; margin-left: 6px; }
.dl-dot { position: absolute; right: -6px; top: -6px; width: 8px; height: 8px; border-radius: 50%; background: #ccc; }

.bookmarks { height: 35px; flex: none; background: #151515; display: flex; align-items: center; padding: 0 0 5px 13px; gap: 13px; color: #c9c9c9; font-family: Roboto, sans-serif; font-size: 12px; white-space: nowrap; }
.bm { display: flex; align-items: center; gap: 10px; }
.bm-ic { width: 12px; height: 12px; color: #ccc; }
.bm-fav { width: 14px; height: 14px; margin-right: -2px; }
.amz { width: 14px; height: 15px; background: #fff; color: #111; border-radius: 2px; text-align: center; line-height: 13px; font-weight: 700; font-size: 12px; border-bottom: 2px solid #f90; margin-right: -2px; }

.banner { height: 38px; flex: none; background: #177dc9; display: flex; align-items: center; justify-content: center; color: #fff; font-size: 15.500px; position: relative; padding: 0 24px 2px 0; }
.banner-title { display: flex; align-items: center; gap: 6px; }

/* panels */
.top-row { height: 546px; flex: none; display: grid; grid-template-columns: 623px 623px 622px; column-gap: 5px; }
.bottom-row { flex: 1; min-height: 0; display: grid; grid-template-columns: 937px 936px; column-gap: 5px; }
.panel { display: flex; flex-direction: column; min-height: 0; min-width: 0; }
.ptabs { height: 36px; flex: none; background: #f5f5f5; display: flex; align-items: flex-start; padding: 6px 18px 0 21px; gap: 10px; }
.ptabs.tall { height: 44px; padding-top: 14px; }
.ptab { height: 24px; display: flex; align-items: center; gap: 7px; padding: 0 10px 1px 8px; border-radius: 2px; color: #111; white-space: nowrap; }
.ptab svg { color: #808080; }
.ptab .muted { color: #999; }
.ptab.on { background: #3e97d9; color: #fff; }
.ptab.on svg { color: #8fc5ee; }
.ptab-tools { margin-left: auto; height: 24px; display: flex; align-items: center; gap: 8px; color: #52a3e0; }
.ptab-tools .help { margin-left: -1px; }
.toggle { width: 18px; height: 12px; }
.help { font-weight: 700; font-size: 15px; color: #4a9fe0; line-height: 20px; width: 9px; text-align: center; }
.help.gray { color: #9a9a9a; }
.help.banner-help { position: absolute; right: 18px; top: 8px; color: #d0e8fa; }
.pbody { flex: 1; min-height: 0; background: #fff; position: relative; overflow: hidden; }
.ptool { height: 36px; flex: none; background: #fff; display: flex; align-items: center; padding: 0 8px; color: #555; font-size: 12px; }
.tool-34 { height: 34px; }
.sl-label { width: 45px; }
.slider { width: 75px; height: 9px; background: #f2f2f2; border: 1px solid #ccc; border-radius: 5px; position: relative; }
.slider i { position: absolute; left: -1px; top: -4px; width: 15px; height: 15px; background: #fff; border: 1px solid #bbb; border-radius: 50%; }
.slider i::after { content: ""; position: absolute; left: 5px; top: 5px; width: 3px; height: 3px; background: #555; border-radius: 50%; }
.slider.focus i { border-color: #5aa0d8; }
.slider.short { width: 50px; }

/* cirrus */
.cirrus { width: 623px; height: 474px; font-family: "Liberation Serif", "Times New Roman", serif; }

/* reader */
.reader { padding: 25px 20px 0 10px; color: #222; }
.reader-title { margin: 0 0 15px; font-size: 15.200px; line-height: 19px; font-weight: 700; color: #111; }
.reader-text { margin: 0; font-size: 13px; line-height: 19px; white-space: nowrap; }
.vscroll { position: absolute; right: 0; width: 14px; background: #fff; }
.reader-scroll { top: 0; bottom: 0; width: 13px; right: 0; }
.sb-up, .sb-down { position: absolute; left: 3px; width: 8px; height: 6px; color: #666; }
.sb-up { top: 5px; transform: rotate(180deg); color: #bbb; }
.sb-down { bottom: 6px; }
.sb-thumb { position: absolute; left: 3px; top: 14px; width: 6px; height: 51px; background: #c9ced8; border-radius: 3px; }
.reader-strip { height: 30px; flex: none; background: #ededed; position: relative; }
.strip-mark { position: absolute; left: 14px; top: 0; bottom: 0; width: 2px; background: #177dc9; }
.btn-ico { width: 24px; height: 24px; border: 1px solid #d8d8d8; border-radius: 3px; background: #f3f3f3; display: flex; align-items: center; justify-content: center; color: #aaa; margin-right: 8px; }
.flip { transform: scaleX(-1); }
.tsep { width: 1px; height: 16px; background: #ddd; margin-right: 8px; }
.combo { width: 199px; height: 24px; border: 1px solid #c8c8c8; background: #fff; display: flex; align-items: center; justify-content: flex-end; gap: 14px; padding-right: 5px; }
.chev { width: 10px; height: 6px; color: #aaa; }
.btn-bulb { margin-left: auto; width: 44px; height: 24px; border: 1px solid #d8d8d8; border-radius: 3px; background: #f5f5f5; display: flex; align-items: center; justify-content: center; gap: 9px; }
.bulb { width: 11px; height: 16px; color: #aaa; }
.btn-text { height: 24px; border: 1px solid #d8d8d8; border-radius: 3px; background: #f5f5f5; display: flex; align-items: center; padding: 0 8px; color: #666; margin-left: 9px; }
.btn-display { gap: 5px; padding: 0 6px; width: 88px; }
.gearfill { fill: #999; stroke: #999; color: #999; }

/* trends */
.trends { display: flex; flex-direction: column; align-items: center; padding-top: 5px; }
.legend { height: 20px; flex: none; display: flex; border: 1px solid #d0d0d0; border-radius: 3px; font-size: 12px; color: #444; }
.lg { display: flex; align-items: center; gap: 4px; padding: 0 7px 0 10px; border-left: 1px solid #d0d0d0; }
.lg:first-child { border-left: 0; }
.dot { width: 11px; height: 11px; border-radius: 50%; }
.d-year { background: #0000ff; }
.d-world { background: #32b432; }
.d-new { background: #ff00ff; }
.d-free { background: #00f000; }
.d-congress { background: #7a3dff; }
.chart { width: 622px; height: 449px; flex: none; font-family: "Liberation Sans", sans-serif; }
.chart text { fill: #333; font-size: 10px; }
.chart .title { font-size: 12px; fill: #222; }
.chart .axis { stroke: #000; stroke-width: 1; fill: none; }

/* summary */
.summary { padding: 24px 10px 0; font-size: 13px; color: #222; }
.summary p { margin: 0 0 15px; line-height: 15px; }
.summary p.tight { margin: 0 0 2px; }
.summary ul { margin: 0; padding-left: 40px; line-height: 16px; font-size: 12px; }
.kw { background: #ffff00; color: #1282cc; font-size: 13px; }
.summary small { font-size: 11px; }
.dotted { border-bottom: 1px dotted #8a8ae0; }

/* contexts */
.ctx-table { width: 936px; table-layout: fixed; border-collapse: collapse; font-size: 13px; }
.ctx-table th { height: 29px; font-weight: 400; color: #666; border-bottom: 2px solid #ddd; border-left: 1px solid #e4e4e4; padding: 0; text-align: left; }
.ctx-table th:first-child { border-left: 0; }
.ctx-table td { height: 25px; padding: 2px 0 0; border-bottom: 1px solid #d6d6d6; white-space: nowrap; color: #222; }
.c-x { width: 23px; }
.c-doc { width: 81px; }
.ctx-table th.c-doc, .ctx-table td.c-doc { padding-left: 11px; }
.c-left { width: 384px; text-align: right; }
.ctx-table th.c-left { text-align: right; padding-right: 22px; }
.ctx-table td.c-left { padding-right: 9px; }
.c-term { width: 50px; }
.ctx-table th.c-term { padding-left: 12px; }
.ctx-table td.c-term { padding-left: 15px; }
.ctx-table th.c-right, .ctx-table td.c-right { padding-left: 11px; }
.plus { width: 11px; height: 11px; margin-left: 6px; color: #888; }
.ctx-scroll { top: 30px; bottom: 0; }
.ctx-scroll .sb-up { top: 7px; left: 4px; }
.ctx-scroll .sb-down { bottom: 5px; left: 4px; }
.ctx-scroll .sb-thumb { left: 4px; top: 15px; height: 56px; }
.ctx-tool { height: 37px; border-top: 1px solid #ccc; gap: 11px; font-size: 13px; }
.count { margin-left: -2px; }
.expand { margin: 0 3px 0 1px; }

/* footer */
.foot { height: 19px; flex: none; background: #f5f5f5; border-bottom: 1px solid #000; text-align: center; font-size: 10px; line-height: 17px; color: #555; }
.foot a { color: #1f7fc8; }
```
FILE: script.js
```js
// Trends chart: relative frequencies (x 1e-4) per document segment.
var series = [
  { color: '#0000ff', line: '#2020c8', vals: [3, 1.5, 3, 3, 4.5, 1.5, 1.5, 3, 1.5, 4.5] },
  { color: '#32b432', line: '#3f9440', vals: [1.5, 3, 0, 0, 6, 7.5, 4.5, 3, 0, 3] },
  { color: '#ff00ff', line: '#c41ec4', vals: [6, 7.5, 9, 1.5, 4.5, 9, 10.5, 4.5, 6, 6] },
  { color: '#00f000', line: '#10c020', vals: [0, 6, 1.5, 0, 3, 1.5, 0, 9, 0, 7.5] },
  { color: '#7a3dff', line: '#6a34e0', vals: [4.5, 1.5, 4.5, 3, 1.5, 4.5, 1.5, 1.5, 3, 3] }
];
var NS = 'http://www.w3.org/2000/svg';
var chart = document.getElementById('chart');
var Y0 = 607, UNIT = 32.4, X0 = 1387, STEP = 54.95;
function px(i) { return X0 + i * STEP; }
function py(v) { return Y0 - v * UNIT; }
function el(name, attrs, parent, text) {
  var n = document.createElementNS(NS, name);
  for (var k in attrs) n.setAttribute(k, attrs[k]);
  if (text !== undefined) n.textContent = text;
  (parent || chart).appendChild(n);
  return n;
}
var defs = el('defs', {});
var clip = el('clipPath', { id: 'plot' }, defs);
el('rect', { x: 1359, y: 203, width: 560, height: 404.5 }, clip);
var plot = el('g', { 'clip-path': 'url(#plot)' });

series.forEach(function (s) {
  s.vals.forEach(function (v, i) {
    el('rect', { x: px(i) - 24.5, y: py(v), width: 49, height: v * UNIT, fill: s.color, 'fill-opacity': 0.012, stroke: s.line, 'stroke-opacity': 0.14 }, plot);
  });
});
function smooth(vals) {
  var T = 0.25, pts = vals.map(function (v, i) { return [px(i), py(v)]; });
  var d = 'M' + pts[0][0] + ' ' + pts[0][1];
  function tan(i) {
    var a = pts[Math.max(i - 1, 0)], b = pts[Math.min(i + 1, pts.length - 1)];
    return [(b[0] - a[0]) * T, (b[1] - a[1]) * T];
  }
  for (var i = 0; i < pts.length - 1; i++) {
    var t0 = tan(i), t1 = tan(i + 1);
    d += 'C' + (pts[i][0] + t0[0]) + ' ' + (pts[i][1] + t0[1]) + ' ' + (pts[i + 1][0] - t1[0]) + ' ' + (pts[i + 1][1] - t1[1]) + ' ' + pts[i + 1][0] + ' ' + pts[i + 1][1];
  }
  return d;
}
series.forEach(function (s) {
  el('path', { d: smooth(s.vals), fill: 'none', stroke: s.line, 'stroke-width': 1 }, plot);
});
series.forEach(function (s) {
  s.vals.forEach(function (v, i) {
    el('circle', { cx: px(i), cy: py(v), r: 4.5, fill: s.color }, plot);
  });
});
el('path', { class: 'axis', d: 'M1359 218V607.5M1359 607.5H1908' });
for (var t = 0; t <= 12; t++) {
  var y = py(t);
  el('path', { class: 'axis', d: 'M1355 ' + y + 'H1359' });
  el('text', { x: 1353, y: y + 3, 'text-anchor': 'end' }, chart, (t / 10000).toFixed(4));
}
for (var i = 0; i < 10; i++) {
  el('path', { class: 'axis', d: 'M' + px(i) + ' 607V610' });
  el('text', { x: px(i) + 1.5, y: 625, 'text-anchor': 'middle' }, chart, String(i + 1));
}
el('text', { class: 'title', x: 1629.5, y: 640, 'text-anchor': 'middle' }, chart, 'Document Segments (Mr. Vice President, my old colleague from Massa...)');
el('text', { class: 'title', 'text-anchor': 'middle', transform: 'translate(1322 414) rotate(-90)' }, chart, 'Relative Frequencies');
```
